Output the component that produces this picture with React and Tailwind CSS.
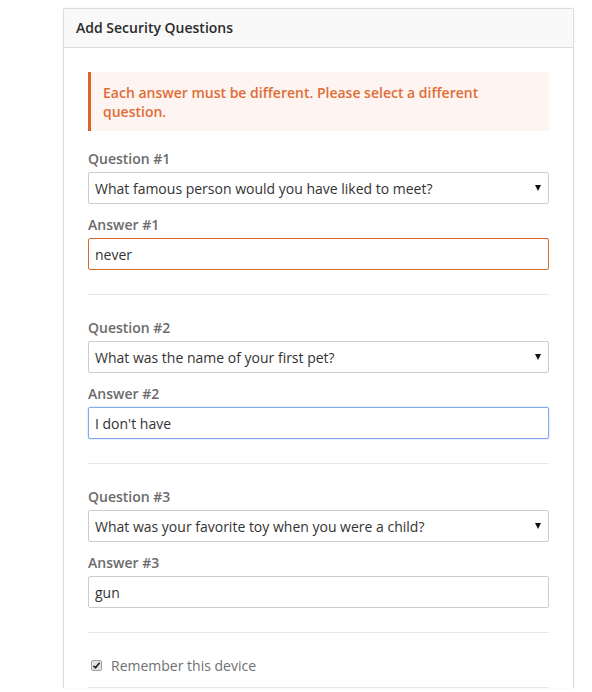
import React, { useState } from "react";

const questions = [
  { id: 1, question: "What famous person would you have liked to meet?", answer: "never", state: "error" },
  { id: 2, question: "What was the name of your first pet?", answer: "I don't have", state: "focus" },
  { id: 3, question: "What was your favorite toy when you were a child?", answer: "gun", state: "normal" },
];

const inputBorder = {
  error: "border-[#d9692f]",
  focus: "border-[#86a9ec] shadow-[0_0_2px_rgba(102,153,238,0.6)]",
  normal: "border-[#cccccc]",
};

const QuestionBlock = ({ item, onChange }) => (
  <div>
    <label className="block h-5 text-[14px] leading-5 font-semibold text-[#6b6b6b] mb-[3px]">
      Question #{item.id}
    </label>
    <div className="relative h-8">
      <select
        value={item.question}
        onChange={() => {}}
        className="appearance-none w-full h-8 border border-[#cccccc] rounded-[2px] bg-white pl-[6px] pr-6 text-[14px] text-[#333] outline-none"
      >
        <option>{item.question}</option>
      </select>
      {/* dropdown arrow */}
      <span className="pointer-events-none absolute right-[8px] top-[13px] w-0 h-0 border-l-[3.5px] border-r-[3.5px] border-t-[6px] border-l-transparent border-r-transparent border-t-[#111]" />
    </div>
    <label className="block h-5 mt-[11px] text-[14px] leading-5 font-semibold text-[#6b6b6b] mb-[3px]">
      Answer #{item.id}
    </label>
    <input
      type="text"
      value={item.answer}
      onChange={(e) => onChange(item.id, e.target.value)}
      className={`block w-full h-8 border rounded-[2px] bg-white pl-[6px] text-[14px] text-[#333] outline-none ${inputBorder[item.state]}`}
    />
  </div>
);

const App = () => {
  const [items, setItems] = useState(questions);
  const [remember, setRemember] = useState(true);

  const handleChange = (id, value) => {
    setItems((prev) => prev.map((q) => (q.id === id ? { ...q, answer: value } : q)));
  };

  return (
    <div className="min-h-[692px] bg-white pt-2 font-['Open_Sans',sans-serif]">
      <div className="ml-[63px] w-[511px] bg-white border border-[#dddddd] border-b-0 rounded-t-[2px] shadow-[0_0_2px_rgba(0,0,0,0.08)]">
        <div className="h-[39px] bg-[#f9f9f9] border-b border-[#dddddd] px-3 pb-[2px] flex items-center text-[14px] font-semibold text-[#2b2b2b]">
          Add Security Questions
        </div>
        <div className="px-6 pt-6">
          <div className="border-l-[3px] border-[#d9632a] bg-[#fef4f1] pl-3 pr-4 pt-[11px] pb-[10px] text-[14px] leading-[19px] font-semibold text-[#de6d36]">
            Each answer must be different. Please select a different question.
          </div>

          <div className="mt-[18px]">
            {items.map((item, i) => (
              <div key={item.id}>
                {i > 0 && <div className="my-[23px] mt-6 border-t border-[#e8e8e8]" />}
                <QuestionBlock item={item} onChange={handleChange} />
              </div>
            ))}
          </div>

          <div className="mt-6 border-t border-[#e8e8e8]" />
          <label className="flex items-center h-[54px] pt-[10px] gap-[9px] text-[14px] text-[#707070] cursor-pointer">
            <span
              onClick={() => setRemember(!remember)}
              className="ml-[3px] w-[11px] h-[11px] rounded-[2px] border border-[#a0a0a0] bg-[#e3e3e3] flex items-center justify-center"
            >
              {remember && (
                <svg width="9" height="9" viewBox="0 0 9 9">
                  <path d="M1.5 4.8 L3.5 6.8 L7.6 1.8" fill="none" stroke="#222" strokeWidth="1.7" />
                </svg>
              )}
            </span>
            Remember this device
          </label>
          <div className="border-t border-[#e8e8e8]" />
        </div>
      </div>
    </div>
  );
};

export default App;
